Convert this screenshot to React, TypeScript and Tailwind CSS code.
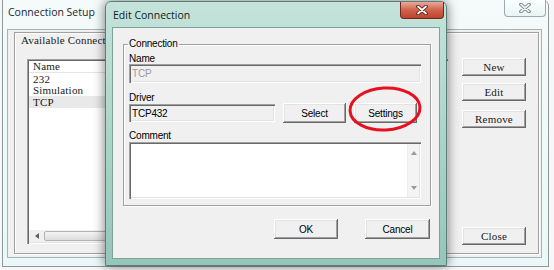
import React from "react";

const raised =
  "bg-[#f0f0f0] shadow-[inset_-1px_-1px_0_#696969,inset_1px_1px_0_#ffffff,inset_-2px_-2px_0_#a0a0a0,inset_2px_2px_0_#e3e3e3]";
const sunken =
  "shadow-[inset_1px_1px_0_#a0a0a0,inset_2px_2px_0_#696969,inset_-1px_-1px_0_#ffffff,inset_-2px_-2px_0_#e3e3e3]";
const mono = "[font-family:'Liberation_Serif',serif] text-[11px] tracking-[0.2px] text-[#1a1a1a]";
const sans = "[font-family:'Liberation_Sans',Arial,sans-serif] text-[10px] tracking-[-0.2px]";
const title = "[font-family:'Open_Sans',sans-serif] text-[10.5px]";

function CloseGlyph({ light }: { light?: boolean }) {
  return (
    <svg width="12" height="10" viewBox="0 0 12 10">
      <path d="M2 1.5 L10 8.5 M10 1.5 L2 8.5" stroke={light ? "#6d7c80" : "#4a1a14"} strokeWidth="3.6" strokeLinecap="round" />
      <path d="M2 1.5 L10 8.5 M10 1.5 L2 8.5" stroke={light ? "#eef4f5" : "#ffffff"} strokeWidth="1.8" strokeLinecap="round" />
    </svg>
  );
}

function SetupButton({ label, className }: { label: string; className?: string }) {
  return (
    <div className={`w-[64px] h-[18px] flex items-center justify-center ${raised} ${mono} ${className ?? ""}`}>
      {label}
    </div>
  );
}

function SetupWindow() {
  const rows = ["232", "Simulation", "TCP"];
  return (
    <div className="absolute left-[2px] top-0 w-[547px] h-[267px] flex flex-col rounded-tr-[6px] border border-t-0 border-[#8c9a9c] bg-gradient-to-b from-[#f5fafa] to-[#eaf8f9]">
      {/* title bar */}
      <div className="relative h-[29px] flex items-start pl-[5px] pt-[5px]">
        <span className={`${title} text-[#1c2630]`}>Connection Setup</span>
        <div className="absolute right-[2px] top-0 w-[42px] h-[17px] flex items-center justify-center rounded-b-[4px] border border-t-0 border-[#9aaaae] bg-gradient-to-b from-[#fbfefe] to-[#e9f5f6]">
          <CloseGlyph light />
        </div>
      </div>

      {/* client area */}
      <div className="flex-1 ml-[4px] mr-[6px] mb-[8px] flex border border-[#a6b4b6] bg-[#f0f0f0] pl-[6px] pr-[2px] pt-[2px] pb-[3px]">
        <div className="flex-1 flex flex-col border border-[#a0a0a0] shadow-[inset_1px_1px_0_#ffffff,1px_1px_0_#ffffff]">
          <div className={`pl-[6px] pt-[1px] h-[14px] leading-[12px] ${mono}`}>Available Connections</div>
          <div className="flex">
            {/* list */}
            <div className={`ml-[12px] mt-[12px] w-[421px] h-[185px] flex flex-col bg-white p-[2px] ${sunken}`}>
              <div className={`h-[12px] flex items-center pl-[4px] border-b border-[#e5e5e5] ${mono}`}>Name</div>
              {rows.map((r) => (
                <div
                  key={r}
                  className={`h-[11.5px] flex items-center pl-[4px] ${mono} ${r === "TCP" ? "bg-[#e9e9e9]" : ""}`}
                >
                  {r}
                </div>
              ))}
              <div className="flex-1" />
              <div className="h-[12px] flex bg-[#f0f0f0]">
                <div className="w-[15px] flex items-center justify-center">
                  <svg width="4" height="6" viewBox="0 0 4 6">
                    <path d="M4 0 L0 3 L4 6 Z" fill="#606060" />
                  </svg>
                </div>
                <div className="flex-1 my-[1px] rounded-[2px] border border-[#b4b4b4] bg-gradient-to-b from-[#f4f4f4] to-[#dcdcdc]" />
              </div>
            </div>

            {/* buttons */}
            <div className="ml-[14px] mt-[11px] flex flex-col">
              <SetupButton label="New" />
              <SetupButton label="Edit" className="mt-[7px]" />
              <SetupButton label="Remove" className="mt-[9px]" />
              <SetupButton label="Close" className="mt-[99px]" />
            </div>
          </div>
        </div>
      </div>
    </div>
  );
}

function DlgButton({ label, w }: { label: string; w: string }) {
  return (
    <div className={`${w} h-[20px] flex items-center justify-center text-black ${raised} ${sans}`}>{label}</div>
  );
}

function EditDialog() {
  return (
    <div className="absolute left-[105px] top-[1px] w-[342px] h-[265px] flex flex-col rounded-t-[6px] border border-[#5d7e77] bg-gradient-to-b from-[#c4e3db] via-[#abd5c9] to-[#96c6b9] shadow-[0_0_12px_rgba(0,0,0,0.55)]">
      {/* title bar */}
      <div className="relative h-[25px] flex items-start pl-[7px] pt-[6px]">
        <span className={`${title} text-[#111a1a]`}>Edit Connection</span>
        <div className="absolute right-[2px] top-0 w-[44px] h-[17px] flex items-center justify-center rounded-b-[4px] border border-t-0 border-[#6b2a20] bg-gradient-to-b from-[#e9a898] via-[#d0624c] to-[#c0432c]">
          <CloseGlyph />
        </div>
      </div>

      {/* client area */}
      <div className="h-[232px] mx-[6px] flex flex-col border border-[#7ea39a] bg-[#f0f0f0]">
        <fieldset className="ml-[10px] mr-[8px] mt-[10px] h-[168px] border border-[#a0a0a0] shadow-[inset_1px_1px_0_#ffffff,1px_1px_0_#ffffff] pl-[5px] pr-[9px] pt-[4px]">
          <legend className={`ml-[-1px] px-[1px] leading-[12px] text-black ${sans}`}>Connection</legend>
          <div className={`leading-[10px] text-black ${sans}`}>Name</div>
          <div className={`h-[19px] flex items-center pl-[3px] bg-[#f0f0f0] text-[#9a9a9a] ${sunken} ${sans}`}>TCP</div>

          <div className={`mt-[10px] leading-[10px] text-black ${sans}`}>Driver</div>
          <div className="flex items-center">
            <div className={`w-[146px] h-[18px] flex items-center pl-[3px] bg-[#f0f0f0] text-black ${sunken} ${sans}`}>TCP432</div>
            <div className="ml-[8px]">
              <DlgButton label="Select" w="w-[63px]" />
            </div>
            <div className="ml-[8px]">
              <DlgButton label="Settings" w="w-[63px]" />
            </div>
          </div>

          <div className={`mt-[7px] leading-[11px] text-black ${sans}`}>Comment</div>
          <div className={`mt-[1px] h-[57px] flex bg-white p-[2px] ${sunken}`}>
            <div className="flex-1" />
            <div className="w-[12px] flex flex-col items-center justify-between py-[7px] bg-[#f4f4f4] border-l border-[#ececec]">
              <svg width="6" height="4" viewBox="0 0 6 4">
                <path d="M0 4 L3 0 L6 4 Z" fill="#9a9a9a" />
              </svg>
              <svg width="6" height="4" viewBox="0 0 6 4">
                <path d="M0 0 L3 4 L6 0 Z" fill="#9a9a9a" />
              </svg>
            </div>
          </div>
        </fieldset>

        <div className="mt-[13px] flex justify-end pr-[9px]">
          <DlgButton label="OK" w="w-[64px]" />
          <div className="ml-[27px]">
            <DlgButton label="Cancel" w="w-[65px]" />
          </div>
        </div>
      </div>
    </div>
  );
}

export default function App() {
  return (
    <div className="relative w-[554px] h-[270px] overflow-hidden bg-[#f7f7f7]">
      <SetupWindow />
      <EditDialog />
      {/* hand-drawn highlight */}
      <svg className="absolute left-0 top-0 pointer-events-none" width="554" height="270">
        <ellipse cx="385" cy="109" rx="35" ry="21" fill="none" stroke="#e6101e" strokeWidth="3" transform="rotate(-3 385 109)" />
      </svg>
    </div>
  );
}
